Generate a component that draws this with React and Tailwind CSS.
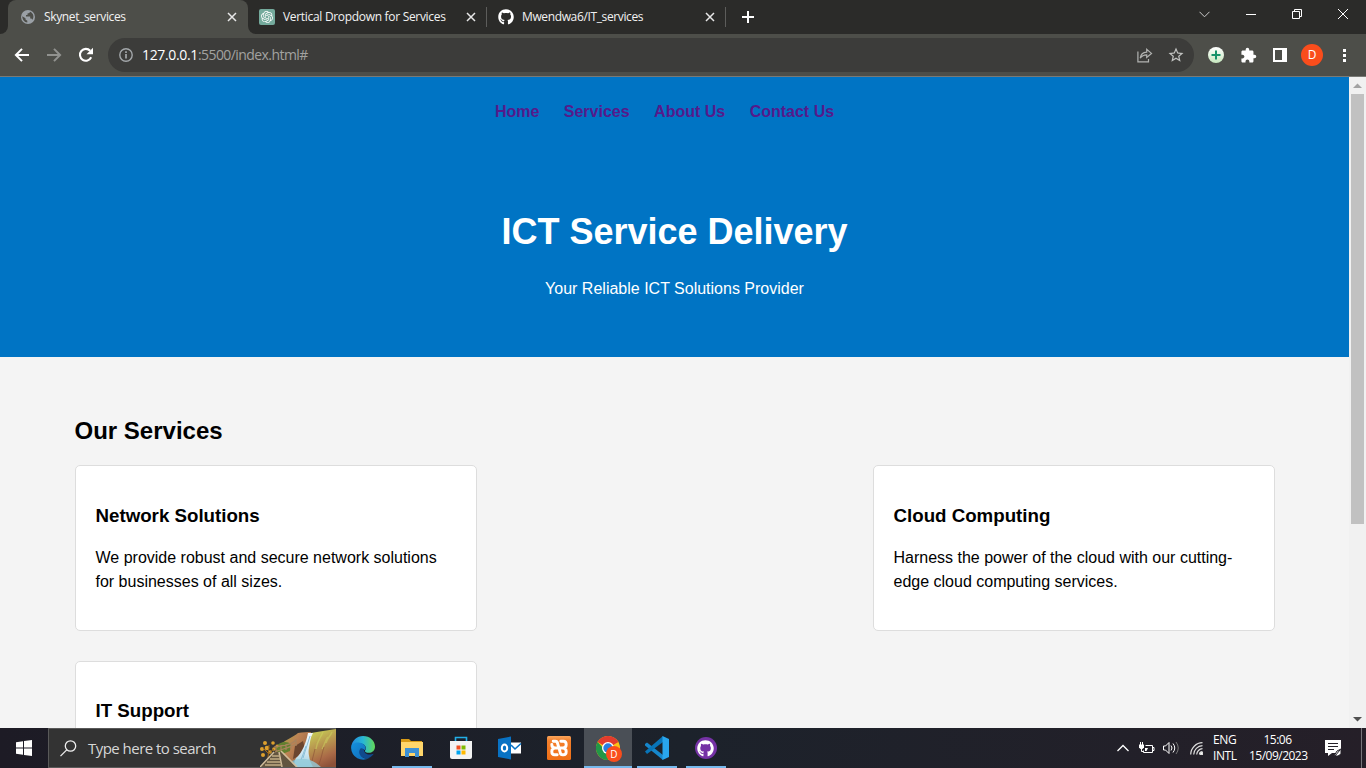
import React from 'react';
import { FaGithub } from 'react-icons/fa';
import { SiOpenai } from 'react-icons/si';
import { MdExtension, MdStarBorder } from 'react-icons/md';

const Cross = ({ className = '' }) => (
  <svg className={className} width="10" height="10" viewBox="0 0 10 10" fill="none" stroke="#e8e8e8" strokeWidth="1.5">
    <path d="M1 1l8 8M9 1l-8 8" />
  </svg>
);

function TabStrip() {
  return (
    <div className="flex h-[34px] bg-[#2b2b29] text-[12px] leading-[16px] text-[#f2f2f2]">
      <div className="flex w-2 items-end bg-[#4d4e49]">
        <div className="h-full w-full rounded-br-lg bg-[#2b2b29]" />
      </div>
      <div className="flex w-60 items-center rounded-t-lg bg-[#4d4e49] pl-[13px] pr-[11px]">
        <svg width="14" height="14" viewBox="0 0 14 14">
          <circle cx="7" cy="7" r="7" fill="#9aa0a6" />
          <path d="M1.300 6.200L4.500 8.300v1.200l1.800 1.200v1.800C3.300 12.200 1.200 9.500 1.300 6.200zM9 1.700c-.3 1.300-1 1.700-2.500 1.700v1.500H5v1.600h4.200v2h1.200l1 1.200c2-2.900 1-6.700-2.400-8z" fill="#4d4e49" />
        </svg>
        <span className="ml-[9px] flex-1 whitespace-nowrap tracking-[-0.36px]">Skynet_services</span>
        <Cross />
      </div>
      <div className="flex w-2 bg-[#4d4e49]">
        <div className="h-full w-full rounded-bl-lg bg-[#2b2b29]" />
      </div>
      <div className="flex w-[230px] items-center pl-[3px] pr-[10px]">
        <span className="flex h-4 w-4 items-center justify-center rounded-[2px] bg-[#74aa9c]">
          <SiOpenai className="h-3 w-3 text-white" />
        </span>
        <span className="ml-2 flex-1 whitespace-nowrap tracking-[-0.31px]">Vertical Dropdown for Services</span>
        <Cross />
      </div>
      <div className="mt-[7px] h-5 w-px bg-[#5d5d5b]" />
      <div className="flex w-[238px] items-center pl-[11px] pr-[10px]">
        <FaGithub className="h-4 w-4 text-white" />
        <span className="ml-2 flex-1 whitespace-nowrap tracking-[-0.37px]">Mwendwa6/IT_services</span>
        <Cross />
      </div>
      <div className="mt-[7px] h-5 w-px bg-[#5d5d5b]" />
      <svg className="ml-4 mt-[11px]" width="12" height="12" stroke="#fff" strokeWidth="2"><path d="M0 6h12M6 0v12" /></svg>
      <div className="ml-auto flex h-7 items-center pr-[18px]">
        <svg className="mr-[36px]" width="11" height="7" fill="none" stroke="#ccc"><path d="M.5 .8l5 5 5-5" /></svg>
        <svg className="mr-[36px]" width="10" height="10" stroke="#fff"><path d="M0 5.500h10" /></svg>
        <svg className="mr-[36px]" width="10" height="10" fill="none" stroke="#fff"><path d="M.5 2.500h7v7h-7zM2.500 2.500v-2h7v7h-2" /></svg>
        <svg width="10" height="10" stroke="#fff"><path d="M0 0l10 10M10 0L0 10" /></svg>
      </div>
    </div>
  );
}

function Toolbar() {
  return (
    <div className="flex h-[43px] items-center border-b border-[#797a76] bg-[#4d4e49] pl-[14px]">
      <svg width="16" height="16" viewBox="0 0 16 16" fill="none" stroke="#fff" strokeWidth="2"><path d="M15 8H2.200M8 1.900L1.900 8 8 14.100" /></svg>
      <svg className="ml-4" width="16" height="16" viewBox="0 0 16 16" fill="none" stroke="#91928f" strokeWidth="2"><path d="M1 8h12.800M8 1.900L14.100 8 8 14.100" /></svg>
      <svg className="ml-4" width="16" height="16" viewBox="0 0 16 16"><path d="M13.200 10.300A5.900 5.900 0 1 1 12.200 3.800" fill="none" stroke="#fff" strokeWidth="2.100" /><path d="M15 .7v6.500H8.500z" fill="#fff" /></svg>
      <div className="ml-[14px] flex h-[34px] w-[1086px] items-center rounded-full bg-[#3c3c3a] pl-[11px] pr-[9px]">
        <svg width="14" height="14" viewBox="0 0 14 14" fill="none" stroke="#a3a7aa" strokeWidth="1.400"><circle cx="7" cy="7" r="6.200" /><path d="M7 6v4.500M7 3.300v1.600" strokeWidth="1.700" /></svg>
        <span className="ml-[9px] flex-1 whitespace-nowrap text-[14px] leading-5 tracking-[-0.57px] text-[#a2a2a0]"><span className="tracking-[-0.35px] text-white">127.0.0.1</span>:5500/index.html#</span>
        <svg width="16" height="15" viewBox="0 0 16 15" fill="none" stroke="#b2b3b1" strokeWidth="1.200"><path d="M.9 3.500v10.400h10.600v-3M3.200 10.200c.5-3.900 2.600-6 6.500-6.100V1.400l4.800 4-4.800 4V6.800c-2.900 0-4.900.9-6.500 3.400z" /></svg>
        <MdStarBorder className="ml-[14px] h-[18px] w-[18px] text-[#c2c3c1]" />
      </div>
      <svg className="ml-[14px]" width="16" height="16" viewBox="0 0 16 16"><defs><linearGradient id="ext" x2="0" y2="1"><stop stopColor="#fff" /><stop offset="1" stopColor="#c7e8bf" /></linearGradient></defs><circle cx="8" cy="8" r="8" fill="url(#ext)" /><path d="M3.500 8h9M8 3.500v9" stroke="#16936a" strokeWidth="2" /></svg>
      <MdExtension className="ml-4 h-[17px] w-[17px] text-white" />
      <svg className="ml-4" width="14" height="14"><path fill="#fff" fillRule="evenodd" d="M0 0h14v14H0zM2 2v10h7V2z" /></svg>
      <span className="ml-[14px] flex h-[22px] w-[22px] items-center justify-center rounded-full bg-[#fa4d1c] text-[12px] leading-none text-white">D</span>
      <svg className="ml-[20px]" width="3" height="14" fill="#fff"><path d="M0 1h3v3H0zM0 6h3v3H0zM0 11h3v3H0z" /></svg>
    </div>
  );
}

const Card = ({ title, children }) => (
  <div className={`h-[166px] w-[402px] shrink-0 rounded-[5px] border border-[#dddddd] bg-white px-5 ${children ? 'pt-[38px]' : 'pt-[37px]'}`}>
    <h3 className="text-[18.72px] font-bold leading-[23px]">{title}</h3>
    <p className="mt-[19px] whitespace-nowrap">{children}</p>
  </div>
);

function Page() {
  return (
    <main className="h-[651px] w-[1349px] overflow-hidden bg-[#f4f4f4] text-[16px] leading-6 text-black [font-family:'Liberation_Sans',Arial,sans-serif]">
      <header className="flex h-[280px] flex-col items-center bg-[#0074c4] text-white">
        <nav className="mt-[23px] flex gap-[24.45px] pr-5 font-bold text-[#551a8b]">
          <a href="#">Home</a><a href="#">Services</a><a href="#">About Us</a><a href="#">Contact Us</a>
        </nav>
        <h1 className="mt-[81px] text-[36px] font-bold leading-[54px]">ICT Service Delivery</h1>
        <p className="mt-[18px]">Your Reliable ICT Solutions Provider</p>
      </header>
      <section className="mx-auto w-[1200px] pt-[56px]">
        <h2 className="text-[24px] font-bold leading-9">Our Services</h2>
        <div className="mt-4 flex justify-between">
          <Card title="Network Solutions">We provide robust and secure network solutions<br />for businesses of all sizes.</Card>
          <Card title="Cloud Computing">Harness the power of the cloud with our cutting-<br />edge cloud computing services.</Card>
        </div>
        <div className="mt-[30px]"><Card title="IT Support" /></div>
      </section>
    </main>
  );
}

const Scrollbar = () => (
  <div className="flex w-[17px] flex-col items-center bg-[#f1f1f1]">
    <svg width="17" height="17" fill="#a3a3a3"><path d="M4 11l4.500-4.500L13 11z" /></svg>
    <div className="h-[430px] w-[13px] bg-[#c1c1c1]" />
    <svg className="mt-auto" width="17" height="17" fill="#505050"><path d="M4 6l4.500 4.500L13 6z" /></svg>
  </div>
);

const Waterfall = () => (
  <svg width="76" height="38" viewBox="0 0 76 38">
    <defs>
      <linearGradient id="cliffL" x2="1" y2=".6"><stop stopColor="#a3b03f" /><stop offset=".5" stopColor="#bd8354" /><stop offset="1" stopColor="#9a6242" /></linearGradient>
      <linearGradient id="cliffR" x1=".3" x2=".7" y2="1"><stop stopColor="#c9d455" /><stop offset=".4" stopColor="#b99a50" /><stop offset=".75" stopColor="#aa6a47" /><stop offset="1" stopColor="#8d5138" /></linearGradient>
      <linearGradient id="fall" x2="0" y2="1"><stop stopColor="#f2f8fb" /><stop offset=".6" stopColor="#cfe6f2" /><stop offset="1" stopColor="#9bd0df" /></linearGradient>
    </defs>
    <path d="M21 15c6-5 12-7 17-11 5-1 9-1 13-1l-3 12-8 14-12 5H18z" fill="url(#cliffL)" />
    <path d="M51 4l12-2 13-2v38H53l-8-11z" fill="url(#cliffR)" />
    <path d="M63 3c-3 7-6 9-7 17M68 8c-3 3-4 10-6 12M72 3c-2 5-5 6-6 11" fill="none" stroke="#cdd560" strokeWidth="1.500" opacity=".5" />
    <path d="M55 20l-3 12M64 18c-2 6-2 9-5 17" fill="none" stroke="#884e36" opacity=".6" />
    <path d="M35 17l8-5 2 8-8 8-4 2z" fill="#6b452f" />
    <path d="M16 17c5-5 11-5 15-2l-1 7-13 5z" fill="#63802f" />
    <path d="M48 4h5c-3 5-3 10-4 15-1 5 0 7 1 13l3 6H37c-4-3-3-5-1-9 6-5 10-15 12-25z" fill="url(#fall)" />
    <path d="M50 7l-7 22M46 17l-5 14" stroke="#82bad4" strokeWidth=".9" />
    <path d="M31 33c6-5 18-4 25 1l5 4H33z" fill="#93cbd9" opacity=".8" />
    <g fill="#dda02e"><circle cx="5" cy="14" r="2" /><circle cx="13" cy="14" r="1.800" /><circle cx="2" cy="20" r="2" /><circle cx="7" cy="19" r="2.300" /><circle cx="14" cy="20" r="1.800" /><circle cx="3" cy="26" r="2" /><circle cx="10" cy="23" r="1.800" /><circle cx="17" cy="17" r="1.500" /></g>
    <path d="M8 29l1-13M8 24L3 19M8 25l6-5" stroke="#a66c17" />
    <path d="M14 23h7l15 15H0z" fill="#625540" />
    <path d="M14 23L0 38M19 23l3 15M21 22l16 16" stroke="#d1bd9c" strokeWidth="1.500" />
    <path d="M12 27h8M10 30h10M7 33h14M5 36h17" stroke="#c1ac84" strokeWidth="1.300" />
    <path d="M15 23c5-3 14-3 22-9M14 18c7-2 15 0 22-7M16 17v6M21 16v6M26 15v6M31 14v6M36 10v7" fill="none" stroke="#a9845d" strokeWidth="1.200" />
  </svg>
);

const Edge = () => (
  <svg width="24" height="24" viewBox="0 0 24 24">
    <defs>
      <linearGradient id="edgeA" x2="1"><stop stopColor="#2388df" /><stop offset=".5" stopColor="#28b7d5" /><stop offset="1" stopColor="#63d957" /></linearGradient>
      <linearGradient id="edgeB" x2="1" y2="1"><stop stopColor="#1491df" /><stop offset="1" stopColor="#1268b3" /></linearGradient>
    </defs>
    <path d="M.2 11C.9 4.500 6 0 12 0c7 0 12 5 12 10.500 0 4-2.800 6.300-6 6.300-2.700 0-4.500-1-4-2.100 2-2.400.6-7.200-4.800-7.200C5 7.500 1.500 8.500.2 11z" fill="url(#edgeA)" />
    <path d="M.1 12C.2 8.200 4 5.700 8.800 6.800c4.700.5 7 4.500 5.200 7.500-2-2.500-5.500-.5-4.700 3.200.8 4 5.200 6 9 4.500A12 12 0 0 1 .1 12z" fill="url(#edgeB)" />
    <path d="M9.500 12.500c-3.500 4 .5 11.500 8 9.600 2.500-1 4.300-2.800 5.200-4.300-3.200 1.500-8.500 1-9.300-2.300-.4-2.300-2-3.800-3.900-3z" fill="#104a8d" />
  </svg>
);

const Folder = () => (
  <svg width="22" height="20" viewBox="0 0 22 20"><path d="M0 1h8l2 2h11v4H0z" fill="#d99b16" /><path d="M0 4h22v14H0z" fill="#ffd66b" /><path d="M4 10h14v9h-4v-4H8v4H4z" fill="#3d91d5" /></svg>
);
const Store = () => (
  <svg width="24" height="24" viewBox="0 0 24 24"><path d="M6.500 6V1.500h11V6" fill="none" stroke="#22afe8" strokeWidth="1.600" /><path d="M1 5h22v16q0 2-2 2H3q-2 0-2-2z" fill="#f3f3f3" /><path fill="#f25022" d="M7.500 9.500h4v4h-4z" /><path fill="#7fba00" d="M12.500 9.500h4v4h-4z" /><path fill="#00a4ef" d="M7.500 14.500h4v4h-4z" /><path fill="#ffb900" d="M12.500 14.500h4v4h-4z" /></svg>
);
const Outlook = () => (
  <svg width="24" height="24" viewBox="0 0 24 24"><path d="M13 6.500h10v11H13z" fill="#fff" /><path d="M13 9l4 4 6-5.500" fill="none" stroke="#0872c4" strokeWidth="1.600" /><path d="M0 3l13-2.500v23L0 21z" fill="#0872c4" /><ellipse cx="6.500" cy="12" rx="2.700" ry="3.500" fill="none" stroke="#fff" strokeWidth="2" /></svg>
);
const Xampp = () => (
  <svg width="24" height="24" viewBox="0 0 24 24">
    <defs><linearGradient id="xa" x2="0" y2="1"><stop stopColor="#fba65d" /><stop offset=".2" stopColor="#f4802c" /><stop offset="1" stopColor="#f06f16" /></linearGradient></defs>
    <rect width="24" height="24" rx="1.500" fill="url(#xa)" />
    <path d="M6.200 5.200h2.100q1.900 0 2.200 2l1.500 4.800M13.800 5.200h2.700q2.700 0 2.700 3.300t-3.200 3.500q3.200.2 3.200 3.500t-2.700 3.300h-1q-1.900 0-2.200-2L12 12M10.200 18.800H7.500q-2.700 0-2.700-3.300T8 12Q4.800 11.800 4.800 8.500M7.500 12h9" fill="none" stroke="#fff" strokeWidth="2.900" strokeLinejoin="round" strokeLinecap="round" />
  </svg>
);
const Chrome = () => (
  <span className="relative flex">
    <svg width="24" height="24" viewBox="0 0 24 24"><circle cx="12" cy="12" r="12" fill="#fbc116" /><path d="M12 12L1.600 6A12 12 0 0 1 22.400 6z" fill="#e33b2e" /><path d="M1.600 6A12 12 0 0 0 12 24l5-9-5 2z" fill="#229747" /><circle cx="12" cy="12" r="6" fill="#fff" /><circle cx="12" cy="12" r="4.700" fill="#287de1" /></svg>
    <span className="absolute left-[10px] top-[10px] flex h-4 w-4 items-center justify-center rounded-full bg-[#fa4d1c] text-[10px] leading-none text-white">D</span>
  </span>
);
const Code = () => (
  <svg width="24" height="24" viewBox="0 0 24 24"><path d="M0 8l2-1.500L18 19v5L0 9.500z" fill="#1687cc" /><path d="M0 15.500L18 0v6L2 18z" fill="#0875b9" /><path d="M17.500 0L24 3v18l-6.500 3z" fill="#29a6ed" /></svg>
);

const Slot = ({ children, active, line }) => (
  <div className={`flex h-10 shrink-0 flex-col items-center ${active ? 'ml-px w-12 bg-[#4a4f56]' : 'w-[49px]'}`}>
    <div className="flex h-[38px] items-center pt-[2px]">{children}</div>
    <div className={`h-[2px] ${active ? 'w-full' : 'w-10'} ${line ? 'bg-[#76b9ed]' : ''}`} />
  </div>
);

function Taskbar() {
  return (
    <footer className="flex h-10 items-center bg-linear-to-r from-[#1d1b25] via-[#1c222b] to-[#251f28] text-white">
      <div className="flex w-12 justify-center"><svg width="16" height="16" viewBox="0 0 16 16" fill="#fff"><path d="M0 2.200l7-1V7.500H0zM8 1l8-1v7.500H8zM0 8.500h7v6.300l-7-1zM8 8.500h8V16l-8-1z" /></svg></div>
      <div className="flex h-10 w-72 items-center border border-r-0 border-[#595959] bg-[#333333] pl-[11px]">
        <svg width="17" height="17" viewBox="0 0 17 17" fill="none" stroke="#eee" strokeWidth="1.300"><circle cx="10.500" cy="6" r="5.200" /><path d="M6.700 9.900L.5 16.100" /></svg>
        <span className="ml-[11px] flex-1 whitespace-nowrap text-[15px] tracking-[-0.53px] text-[#d7d7d7]">Type here to search</span>
        <Waterfall />
      </div>
      <div className="ml-[2px] flex">
        <Slot><Edge /></Slot>
        <Slot line><Folder /></Slot>
        <Slot><Store /></Slot>
        <Slot><Outlook /></Slot>
        <Slot><Xampp /></Slot>
        <Slot active line><Chrome /></Slot>
        <Slot line><Code /></Slot>
        <Slot line><span className="flex h-[22px] w-[22px] items-center justify-center rounded-full bg-[#7532a5]"><FaGithub className="h-[17px] w-[17px] text-white" /></span></Slot>
      </div>
      <div className="ml-auto flex h-10 items-center text-[12px] leading-[16px] tracking-[-0.4px]">
        <svg className="mr-[9px]" width="12" height="8" fill="none" stroke="#fff" strokeWidth="1.300"><path d="M.5 7L6 1.500 11.500 7" /></svg>
        <svg className="mr-[8px]" width="17" height="13" viewBox="0 0 17 13" fill="none" stroke="#fff"><path d="M7.500 3.500h7v7h-9V8.500M14.500 5.500h1.500v3h-1.500M2.500 0v3M4.500 0v3M3.500 6.500v3h2" /><path d="M1 2.500h5v3l-1.500 1.500h-2L1 5.500z" fill="#fff" stroke="none" /><path d="M7 6h3l-1.500 3H7z" fill="#fff" stroke="none" /></svg>
        <svg className="mr-[10px]" width="17" height="14" viewBox="0 0 17 14" fill="none" stroke="#fff"><path d="M.5 5v4h2L6 12.500v-11L2.500 5zM8 4.500q2 2.500 0 5M10 2.500q3.500 4.500 0 9" /><path d="M13 1q4.500 6 0 12" stroke="#777" /></svg>
        <svg className="mr-[10px]" width="13" height="13" viewBox="0 0 13 13" fill="none" stroke="#ddd" strokeWidth="1.200"><path d="M.7 12.500A12 12 0 0 1 12.500 .7M3.700 12.500a9 9 0 0 1 8.800-8.800M6.700 12.500a6 6 0 0 1 5.800-5.800M9.500 12.500a3 3 0 0 1 3-3" /><path d="M10.500 10.500h2v2h-2z" fill="#fff" /></svg>
        <div className="mr-3 w-[24px] whitespace-nowrap">ENG<br />INTL</div>
        <div className="mr-[19px] w-[57px] whitespace-nowrap text-center tracking-[-0.52px]">15:06<br />15/09/2023</div>
        <svg className="mr-[19px]" width="17" height="17" viewBox="0 0 17 17"><path d="M0 0h16v13H7l-4 3v-3H0z" fill="#fff" /><path d="M3 3.500h10M3 6.500h10M3 9.500h6" stroke="#252129" /><path d="M9 16l3-5 4-2v5l-3 2z" fill="#fff" stroke="#252129" /><path d="M10 16l5-6" stroke="#252129" /></svg>
        <div className="mr-1 h-10 w-px bg-[#77757a]" />
      </div>
    </footer>
  );
}

export default function App() {
  return (
    <div className="h-[768px] w-[1366px] overflow-hidden [font-family:'Open_Sans',sans-serif]">
      <TabStrip />
      <Toolbar />
      <div className="flex h-[651px]"><Page /><Scrollbar /></div>
      <Taskbar />
    </div>
  );
}
